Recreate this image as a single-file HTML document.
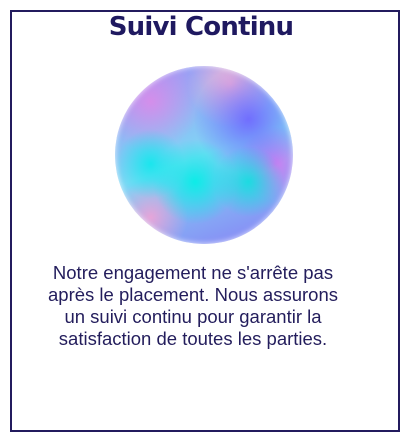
<!DOCTYPE html>
<html><head><meta charset="utf-8"><style>
html,body{margin:0;padding:0;background:#fff;width:410px;height:433px;overflow:hidden}
.box{position:absolute;left:10px;top:10px;width:386px;height:418px;border:2px solid #231b5e;}
h1{position:absolute;left:-4px;width:410px;top:11px;margin:0;text-align:center;font:bold 26px/32px "DejaVu Sans","Liberation Sans",sans-serif;color:#1f1960;letter-spacing:-0.8px}
p{position:absolute;left:-12px;width:410px;top:262px;margin:0;text-align:center;font:18.5px/22px "Liberation Sans",sans-serif;color:#231d5c}
.orb{position:absolute;left:115px;top:66px;width:178px;height:178px;border-radius:50%;overflow:hidden;
background:
radial-gradient(circle at 45% 65%, rgba(0,240,230,.9) 0, rgba(0,230,230,0) 28%),
radial-gradient(circle at 20% 55%, rgba(0,235,235,.8) 0, rgba(0,235,235,0) 20%),
radial-gradient(circle at 75% 65%, rgba(0,230,220,.8) 0, rgba(0,230,220,0) 20%),
radial-gradient(circle at 75% 30%, rgba(110,100,255,.9) 0, rgba(110,100,255,0) 30%),
radial-gradient(circle at 65% 10%, rgba(255,180,210,.9) 0, rgba(255,180,210,0) 22%),
radial-gradient(circle at 20% 20%, rgba(240,130,230,.7) 0, rgba(240,130,230,0) 25%),
radial-gradient(circle at 20% 85%, rgba(255,160,210,.8) 0, rgba(255,160,210,0) 18%),
radial-gradient(circle at 90% 55%, rgba(220,110,240,.8) 0, rgba(220,110,240,0) 20%),
linear-gradient(160deg,#a08cf5,#7fd8f5 50%,#8a7cf5);
box-shadow:inset 0 0 6px rgba(255,255,255,.8)}
</style></head><body>
<div class="box"></div>
<h1>Suivi Continu</h1>
<div class="orb"></div>
<p>Notre engagement ne s'arrête pas<br>après le placement. Nous assurons<br>un suivi continu pour garantir la<br>satisfaction de toutes les parties.</p>
</body></html>
